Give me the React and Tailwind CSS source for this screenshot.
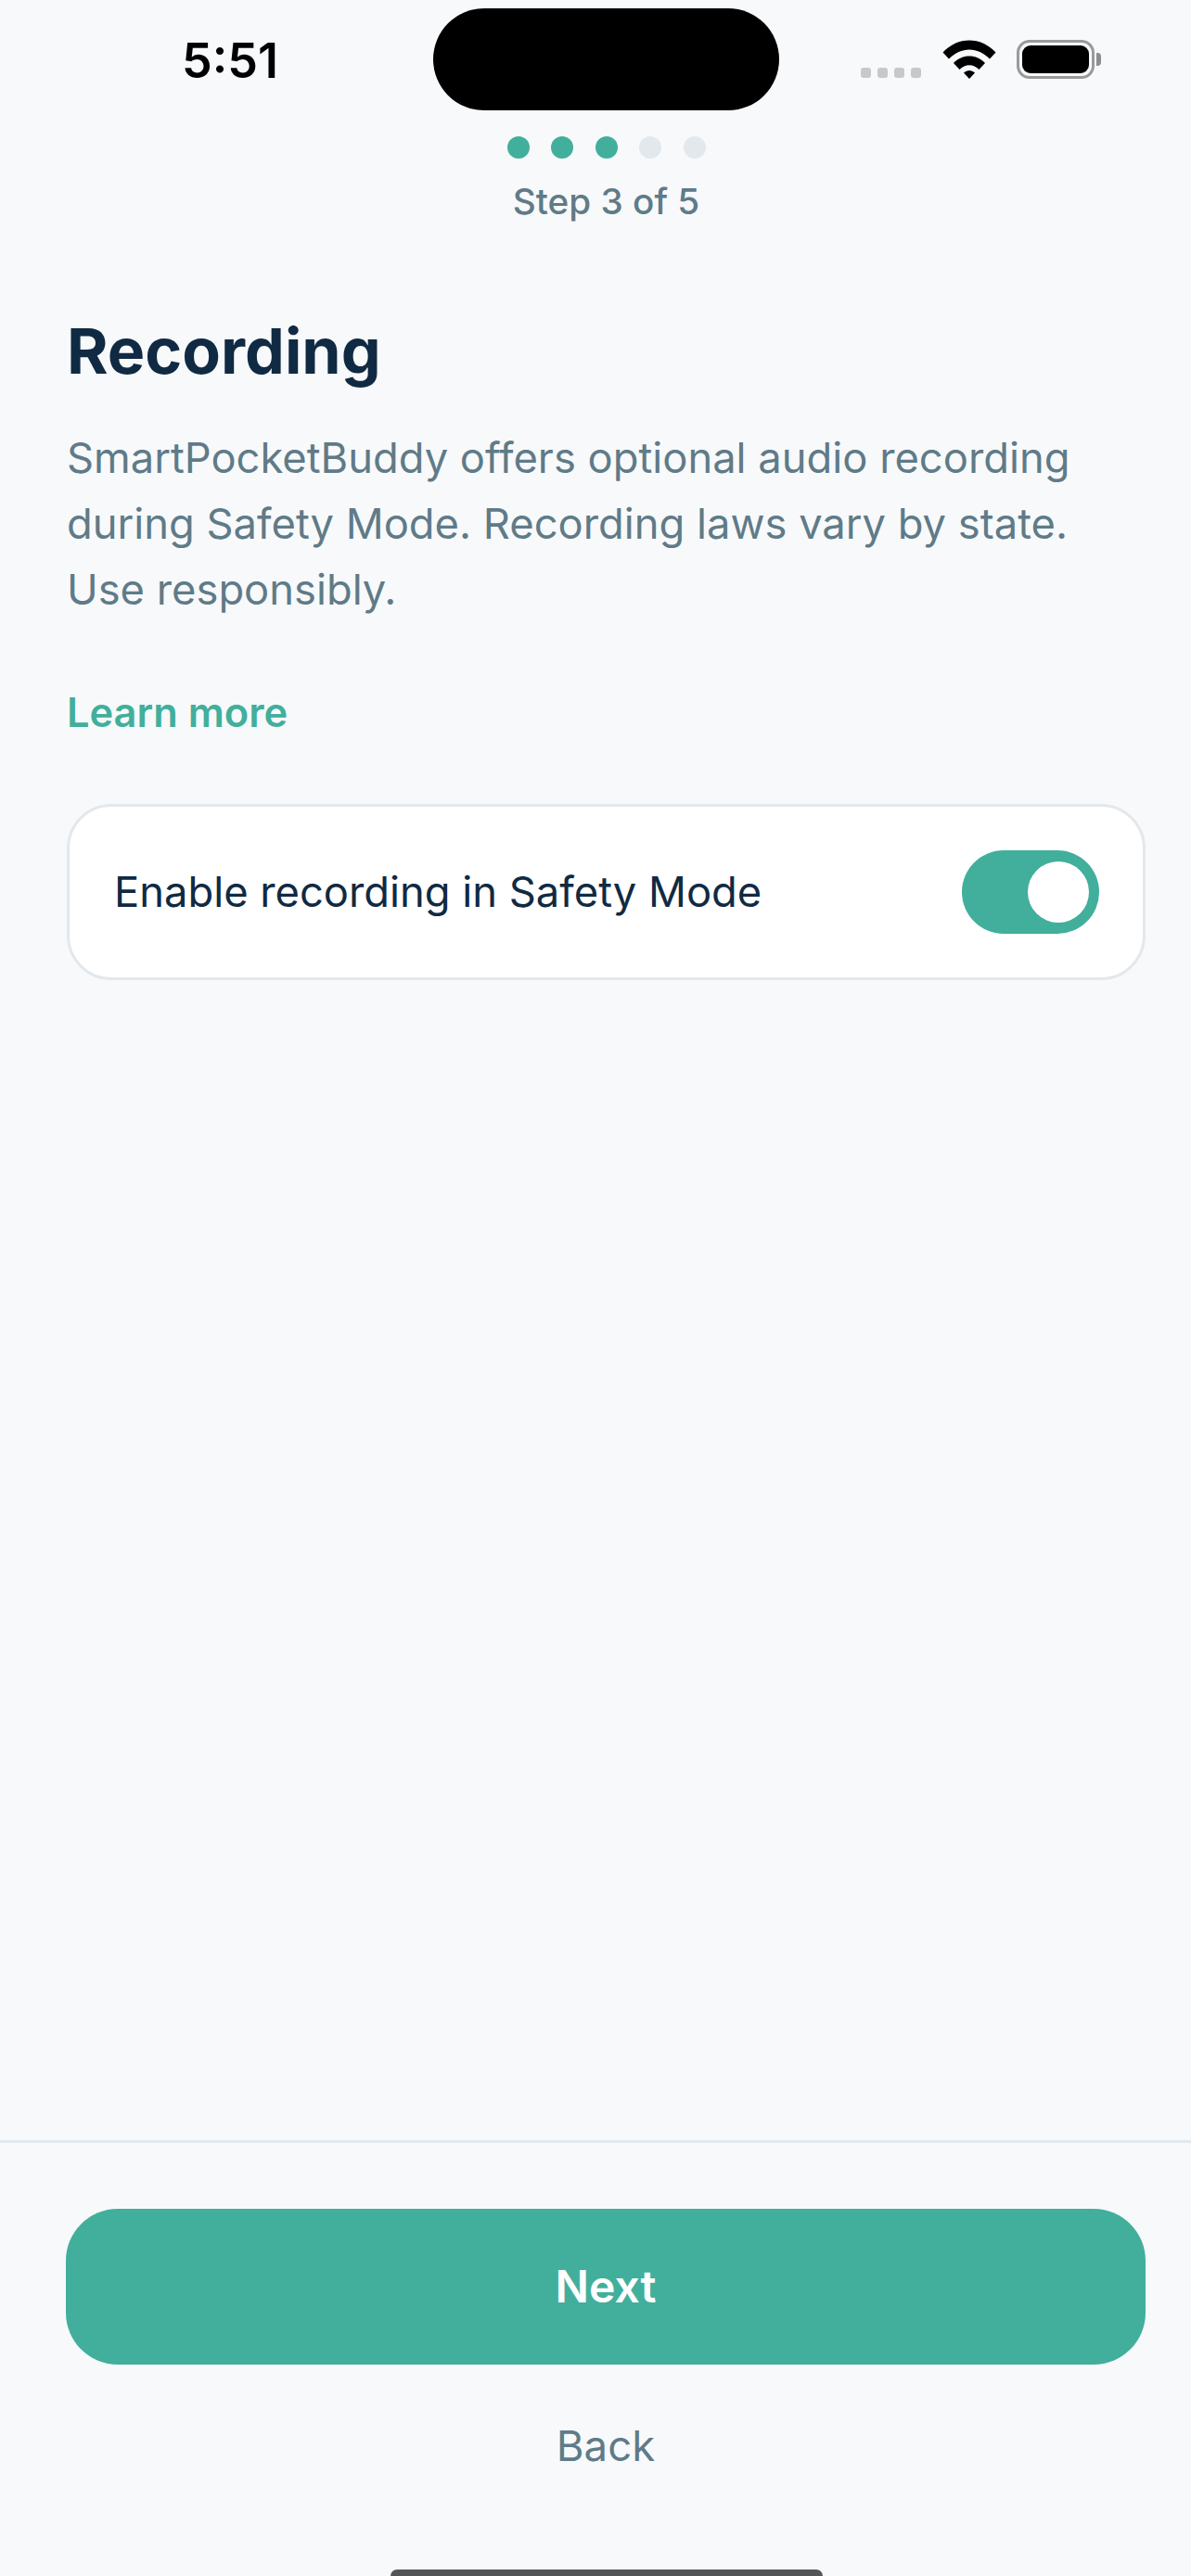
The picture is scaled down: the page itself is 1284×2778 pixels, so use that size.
const font = { fontFamily: 'Inter, sans-serif' };

function StatusIcons() {
  return (
    <div className="flex items-end">
      <div className="flex gap-[7px] mb-[1px]">
        {[0, 1, 2, 3].map(i => (
          <div key={i} className="w-[11px] h-[11px] rounded-[3px] bg-[#c8c8ca]" />
        ))}
      </div>
      <svg className="ml-[23px]" width="58" height="42" viewBox="0 0 58 42" fill="#000">
        <path d="M0.5 13.5 C16 -4 42 -4 57.5 13.5 L51 20.5 C38 7 20 7 7 20.5 Z" />
        <path d="M12 25 C21 15 37 15 46 25 L39.5 32 C33.5 25.5 24.5 25.5 18.5 32 Z" />
        <path d="M23 35.5 C26.5 32 31.5 32 35 35.5 L29 42 Z" />
      </svg>
      <div className="flex items-center ml-[22px]">
        <div className="w-[84px] h-[42px] rounded-[14px] border-[3px] border-[#9a9a9c] p-[3px]">
          <div className="w-full h-full rounded-[9px] bg-black" />
        </div>
        <div className="w-[5px] h-[14px] rounded-r-[4px] bg-[#8e8e90] ml-[2px]" />
      </div>
    </div>
  );
}

function Toggle() {
  return (
    <div className="w-[148px] h-[90px] rounded-full bg-[#41af9c] flex items-center justify-end pr-[11px]">
      <div className="w-[66px] h-[66px] rounded-full bg-white" />
    </div>
  );
}

export default function App() {
  const steps = [true, true, true, false, false];
  return (
    <div className="relative w-[1284px] h-[2778px] bg-[#f8f9fb] flex flex-col overflow-hidden" style={font}>
      {/* dynamic island */}
      <div className="absolute left-[467px] top-[9px] w-[373px] h-[110px] rounded-[55px] bg-black" />

      {/* status bar */}
      <div className="h-[147px] shrink-0 flex justify-between items-start pl-[196px] pr-[97px] pt-[34px]">
        <span className="text-[52px] leading-[63px] font-semibold text-black">5:51</span>
        <div className="pt-[9px]"><StatusIcons /></div>
      </div>

      {/* progreso */}
      <div className="flex flex-col items-center pl-[72px] pr-[49px]">
        <div className="flex gap-[23.5px]">
          {steps.map((on, i) => (
            <div key={i} className={on ? 'w-[24px] h-[24px] rounded-full bg-[#41af9c]' : 'w-[24px] h-[24px] rounded-full bg-[#e2e8ec]'} />
          ))}
        </div>
        <p className="mt-[23px] text-[38.7px] leading-[46px] font-medium text-[#5f7b88]">Step 3 of 5</p>
      </div>

      {/* contenido */}
      <div className="flex-1 pl-[72px] pr-[49px] pt-[97px]">
        <h1 className="text-[68px] leading-[82px] font-bold text-[#102a43]">Recording</h1>
        <p className="mt-[39px] text-[45.3px] leading-[71px] text-[#5f7b88]">
          SmartPocketBuddy offers optional audio recording during Safety Mode. Recording laws vary by state. Use responsibly.
        </p>
        <p className="mt-[70px] text-[43.4px] leading-[54px] font-semibold text-[#41af9c]">Learn more</p>
        <div className="mt-[72px] h-[190px] flex items-center justify-between rounded-[48px] border-[3px] border-[#e2e8ec] bg-white pl-[48px] pr-[47px]">
          <span className="text-[45.3px] leading-[56px] text-[#102a43]">Enable recording in Safety Mode</span>
          <Toggle />
        </div>
      </div>

      {/* acciones */}
      <div className="h-[470px] shrink-0 border-t-[3px] border-[#e2e8ec] pl-[71px] pr-[49px] pt-[71px]">
        <button className="w-full h-[168px] rounded-[56px] bg-[#41af9c] text-white text-[48px] font-semibold">Next</button>
        <p className="mt-[60px] text-center text-[45.5px] leading-[56px] text-[#5f7b88]">Back</p>
      </div>

      {/* home indicator */}
      <div className="absolute left-[421px] bottom-0 w-[466px] h-[7px] rounded-t-[8px] bg-[#555]" />
    </div>
  );
}
